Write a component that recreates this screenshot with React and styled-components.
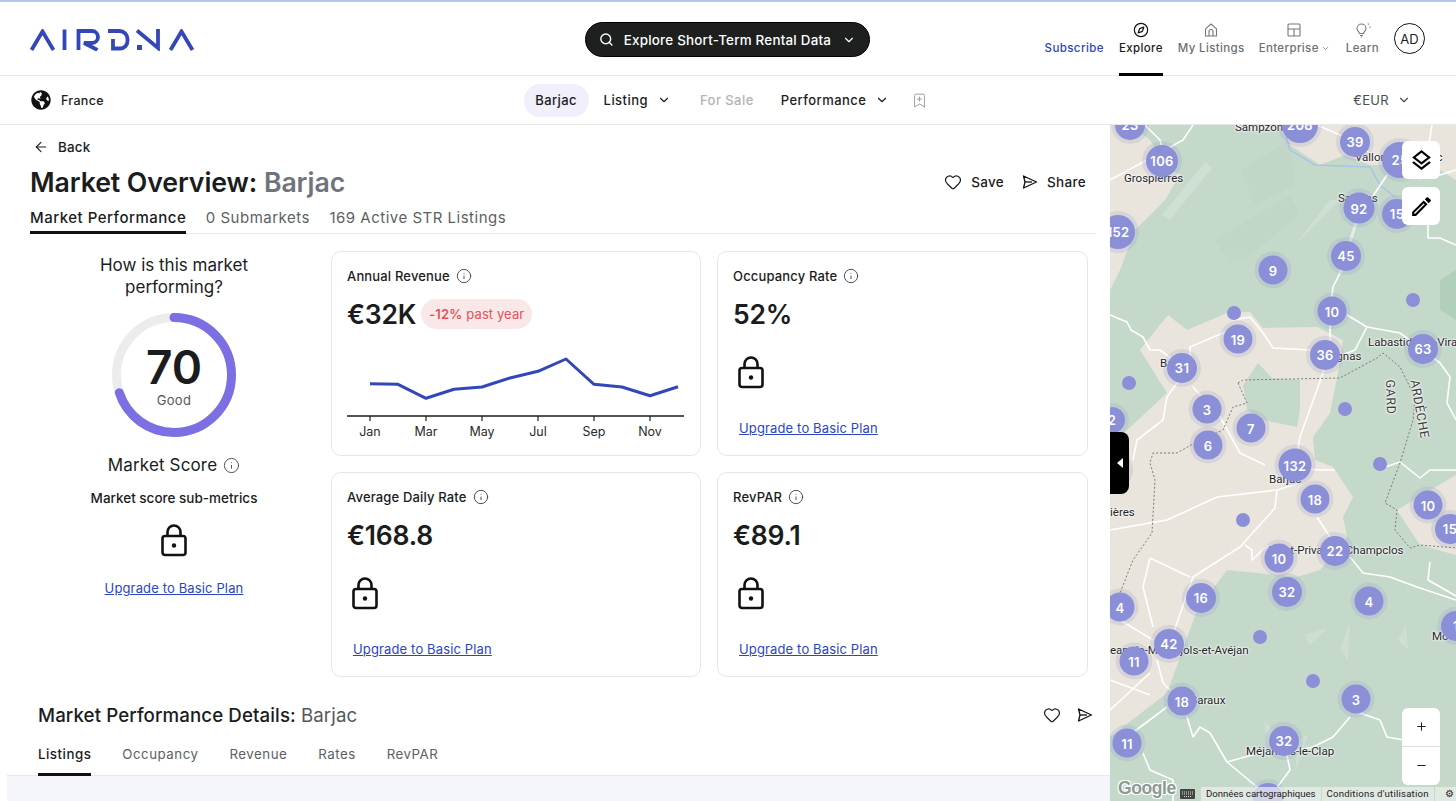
import React from 'react'
import styled, { createGlobalStyle } from 'styled-components'
import { FaGlobeAmericas } from 'react-icons/fa'
import { MdOutlineEdit, MdOutlineLayers } from 'react-icons/md'
import { ArrowLeft, BookmarkPlus, ChevronDown, Compass, Heart, Info, Minus, Plus, Search } from 'lucide-react'

const GlobalStyle = createGlobalStyle`
  html, body { margin: 0; padding: 0; background: #fff; }
  body { font-family: Inter, "Liberation Sans", sans-serif; color: #1b1c1d; overflow: hidden; }
  * { box-sizing: border-box; }
`

const Page = styled.div`
  width: 1456px;
  height: 801px;
  overflow: hidden;
  display: flex;
  flex-direction: column;
  border-top: 2px solid #b4c6ea;
`
const Header = styled.header`
  height: 74px;
  flex: none;
  display: grid;
  grid-template-columns: 1fr auto 1fr;
  align-items: center;
  padding: 0 31px 0 30px;
  border-bottom: 1px solid #e8e8e8;
`
const Logo = styled.svg`
  width: 165px;
  height: 22px;
  display: block;
  margin-top: 2px;
`
const SearchPill = styled.button`
  width: 285px;
  height: 35px;
  margin-top: 2px;
  background: #1e2020;
  color: #fff;
  border: 1px solid #000;
  border-radius: 18px;
  display: flex;
  align-items: center;
  padding: 0 13px;
  font: 500 13.4px Inter, sans-serif;
  letter-spacing: 0.22px;
  white-space: nowrap;

  & > span { margin: 0 11px 0 10px; }
`
const TopNav = styled.nav`
  display: flex;
  justify-content: flex-end;
  align-items: stretch;
  height: 73px;
`
const SubscribeLink = styled.a`
  align-self: flex-start;
  margin: 39px 15px 0 0;
  font-size: 11.5px;
  line-height: 14px;
  font-weight: 500;
  letter-spacing: 0.42px;
  color: #2b45c4;
`
const NavItem = styled.div`
  position: relative;
  display: flex;
  flex-direction: column;
  align-items: center;
  margin-right: ${p => p.$gap}px;
  padding-top: 20px;
  font-size: 11.5px;
  line-height: 14px;
  font-weight: 500;
  letter-spacing: 0.36px;
  color: ${p => (p.$active ? '#1b1c1d' : '#6e7073')};
  white-space: nowrap;

  & > svg { height: 16px; margin-bottom: 3px; }

  ${p => p.$active && `
    &::after {
      content: '';
      position: absolute;
      left: 0;
      right: 0;
      bottom: -1px;
      height: 3px;
      background: #000;
    }
  `}
`
const NavLabel = styled.span`
  display: flex;
  align-items: center;
  gap: 2px;
`
const Avatar = styled.div`
  width: 31px;
  height: 31px;
  align-self: flex-start;
  margin-top: 21px;
  border: 1.3px solid #111;
  border-radius: 50%;
  display: flex;
  align-items: center;
  justify-content: center;
  font-size: 13px;
  color: #222;
`
const SubBar = styled.div`
  height: 49px;
  flex: none;
  display: grid;
  grid-template-columns: 1fr auto 1fr;
  align-items: center;
  padding: 0 35px 0 31px;
  border-bottom: 1px solid #e8e8e8;
`
const Country = styled.div`
  display: flex;
  align-items: center;
  gap: 10px;
  font-size: 12.5px;
  font-weight: 500;
  letter-spacing: 0.3px;
`
const SubNav = styled.div`
  display: flex;
  align-items: center;
`
const SubItem = styled.div`
  display: flex;
  align-items: center;
  gap: 9px;
  margin-right: ${p => p.$gap}px;
  font-size: 13px;
  font-weight: 500;
  letter-spacing: 0.45px;
  color: ${p => (p.$muted ? '#b3b3b3' : '#1b1c1d')};
`
const PlacePill = styled.div`
  height: 33px;
  width: 65px;
  margin-right: 15px;
  border-radius: 17px;
  background: #f0effb;
  display: flex;
  align-items: center;
  justify-content: center;
  font-size: 13px;
  font-weight: 500;
  letter-spacing: 0.35px;
`
const Currency = styled.div`
  display: flex;
  justify-content: flex-end;
  align-items: center;
  gap: 8px;
  margin-right: 10px;
  font-size: 13px;
  letter-spacing: 0.3px;
  color: #4c4e50;
`
const Body = styled.main`
  flex: 1;
  min-height: 0;
  display: flex;
`
const Content = styled.section`
  width: 1110px;
  flex: none;
  display: flex;
  flex-direction: column;
`
const Overview = styled.div`
  padding: 13px 14px 0 30px;
`
const BackLink = styled.div`
  display: flex;
  align-items: center;
  gap: 9px;
  height: 17px;
  padding-left: 3px;
  font-size: 13.4px;
  font-weight: 500;
  letter-spacing: 0.2px;
`
const TitleRow = styled.div`
  display: flex;
  justify-content: space-between;
  align-items: center;
  margin-top: 9px;
  height: 36px;
  padding-right: 10px;
`
const Title = styled.h1`
  margin: 0;
  font-size: 26.7px;
  line-height: 36px;
  font-weight: 600;
  letter-spacing: -0.1px;

  & > span { color: #6f747b; }
`
const Actions = styled.div`
  display: flex;
  align-items: center;
  gap: 18px;
`
const Action = styled.div`
  display: flex;
  align-items: center;
  gap: 9px;
  font-size: 13.5px;
  font-weight: 500;
  letter-spacing: 0.3px;
`
const Tabs = styled.div`
  display: flex;
  gap: ${p => p.$gap}px;
  border-bottom: 1px solid #e8e8e8;
`
const Tab = styled.div`
  position: relative;
  padding: ${p => p.$pad};
  font-size: ${p => p.$size}px;
  line-height: 18px;
  font-weight: ${p => (p.$active ? 500 : 400)};
  letter-spacing: 0.5px;
  color: ${p => (p.$active ? '#1b1c1d' : '#5c5f62')};

  ${p => p.$active && `
    &::after {
      content: '';
      position: absolute;
      left: 0;
      right: 0;
      bottom: -1px;
      height: 3px;
      background: #111;
    }
  `}
`
const Panels = styled.div`
  display: grid;
  grid-template-columns: 288px 1fr;
  margin-top: 17px;
  padding-right: 9px;
`
const ScoreColumn = styled.div`
  display: flex;
  flex-direction: column;
  align-items: center;
  text-align: center;
`
const ScoreTitle = styled.div`
  margin-top: 3px;
  width: 176px;
  font-size: 17px;
  line-height: 22px;
`
const Gauge = styled.div`
  position: relative;
  width: 128px;
  height: 128px;
  margin-top: 13px;
`
const GaugeValue = styled.div`
  position: absolute;
  inset: 0;
  display: flex;
  flex-direction: column;
  align-items: center;
  padding-top: 32px;
  font-size: 46px;
  line-height: 49px;
  font-weight: 600;

  & > span {
    font-size: 13px;
    line-height: 17px;
    font-weight: 400;
    letter-spacing: 0.3px;
    color: #55575a;
  }
`
const ScoreLabel = styled.div`
  display: flex;
  align-items: center;
  gap: 6px;
  margin-top: 16px;
  font-size: 17px;
  line-height: 20px;
  letter-spacing: 0.15px;
`
const SubMetrics = styled.div`
  margin-top: 15px;
  font-size: 13.5px;
  line-height: 17px;
  font-weight: 500;
`
const LockIcon = styled.svg`
  display: block;
  width: 28px;
  height: 34px;
`
const ScoreLock = styled.div`
  margin-top: 16px;
`
const UpgradeLink = styled.a`
  display: block;
  margin-top: ${p => p.$top}px;
  padding-left: ${p => p.$inset || 0}px;
  font-size: 13px;
  line-height: 17px;
  letter-spacing: 0.14px;
  color: #2b45c4;
  text-decoration: underline;
`
const Cards = styled.div`
  display: grid;
  grid-template-columns: 370px 371px;
  grid-auto-rows: 205px;
  gap: 16px;
  margin-left: 13px;
`
const Card = styled.article`
  border: 1.5px solid #e6e6e6;
  border-radius: 10px;
  padding: 15px 15px;
`
const CardLabel = styled.div`
  display: flex;
  align-items: center;
  gap: 6px;
  height: 18px;
  font-size: 13px;
  font-weight: 500;
  letter-spacing: 0.16px;

  & > svg { color: #444; }
`
const MetricRow = styled.div`
  display: flex;
  align-items: center;
  gap: 5px;
  margin-top: 13px;
  height: 32px;
`
const Metric = styled.div`
  font-size: 26.5px;
  font-weight: 600;
  letter-spacing: -0.2px;
  color: #1b1c1d;
`
const Change = styled.div`
  height: 30px;
  padding: 0 8px;
  border-radius: 15px;
  display: flex;
  align-items: center;
  gap: 4px;
  background: #fae8e8;
  color: #e5505a;
  font-size: 13px;
  letter-spacing: 0.1px;

  & > b { font-weight: 600; }
`
const ChartSvg = styled.svg`
  display: block;
  margin-top: 20px;
  width: 337px;
  height: 92px;
`
const CardLock = styled.div`
  margin-top: 25px;
  padding-left: 4px;
`
const Details = styled.div`
  margin-top: 25px;
  padding-left: 7px;
  display: flex;
  flex-direction: column;
  flex: 1;
`
const DetailsHead = styled.div`
  display: flex;
  justify-content: space-between;
  align-items: center;
  height: 26px;
  padding: 0 17px 0 31px;
`
const DetailsTitle = styled.h2`
  margin: 0;
  font-size: 18.7px;
  font-weight: 500;
  letter-spacing: 0.1px;

  & > span { color: #55585c; font-weight: 400; }
`
const IconRow = styled.div`
  display: flex;
  gap: 16px;
  align-items: center;
`
const DetailTabs = styled(Tabs)`
  margin-top: 8px;
  padding-left: 31px;
`
const Band = styled.div`
  flex: 1;
  background: #f5f6fb;
`
const MapPane = styled.aside`
  position: relative;
  flex: 1;
  overflow: hidden;
  background: #c5d9cb;
  font-family: Roboto, "Liberation Sans", sans-serif;
`
const Terrain = styled.svg`
  position: absolute;
  inset: 0;
  width: 346px;
  height: 676px;
`
const MapLabel = styled.div`
  position: absolute;
  transform: translateY(-50%);
  white-space: nowrap;
  font-size: 11.5px;
  color: #222;
  text-shadow: 0 0 2px #fff, 0 0 2px #fff, 0 0 3px #fff;
`
const RotatedLabel = styled(MapLabel)`
  font-size: 12.5px;
  letter-spacing: 0.6px;
  color: #3d3d3d;
  transform: translate(-50%, -50%) rotate(${p => p.$angle}deg);
`
const Pin = styled.div`
  position: absolute;
  transform: translate(-50%, -50%);
  border-radius: 50%;
  background: #8a8fd7;
  color: #fff;
  display: flex;
  align-items: center;
  justify-content: center;
  font: 600 13px Inter, sans-serif;
  letter-spacing: 0.3px;
  box-shadow: 0 0 0 4px rgba(150, 155, 205, 0.22);
`
const Dot = styled(Pin)`
  box-shadow: none;
`
const MapButton = styled.button`
  position: absolute;
  right: 16px;
  top: ${p => p.$top}px;
  width: 38px;
  height: 38px;
  border: none;
  border-radius: 6px;
  background: #fff;
  color: #000;
  display: flex;
  align-items: center;
  justify-content: center;
  padding: 0;
`
const ZoomBox = styled.div`
  position: absolute;
  right: 16px;
  bottom: 16px;
  width: 38px;
  height: 77px;
  border-radius: 6px;
  background: #fff;
  display: grid;
  grid-template-rows: 1fr 1fr;
  color: #222;

  & > div { display: flex; align-items: center; justify-content: center; }
  & > div:first-child { border-bottom: 1px solid #ddd; }
`
const CollapseHandle = styled.div`
  position: absolute;
  left: 0;
  top: 307px;
  width: 19px;
  height: 62px;
  background: #000;
  border-radius: 0 8px 8px 0;
  display: flex;
  align-items: center;
  justify-content: center;

  &::before {
    content: '';
    border-style: solid;
    border-width: 5px 6px 5px 0;
    border-color: transparent #fff transparent transparent;
  }
`
const GoogleMark = styled.div`
  position: absolute;
  left: 8px;
  bottom: 2px;
  font: 700 17.5px "Liberation Sans", sans-serif;
  letter-spacing: -0.4px;
  color: #8d9a92;
  text-shadow: -1px -1px 0 #fff, 1px -1px 0 #fff, -1px 1px 0 #fff, 1px 1px 0 #fff;
`
const Attribution = styled.div`
  position: absolute;
  left: 70px;
  right: 0;
  bottom: 0;
  height: 14px;
  display: flex;
  align-items: center;
  font-size: 9.6px;
  color: #222;
  white-space: nowrap;

  & > svg { flex: none; margin-right: 6px; }
  & > span {
    flex: none;
    height: 14px;
    line-height: 14px;
    padding: 0 5px;
    margin-right: 1px;
    background: rgba(235, 238, 235, 0.72);
  }
  & > span:nth-of-type(2) { letter-spacing: 0.2px; }
  & > span:last-child { flex: 1; margin-right: 0; padding: 0 0 0 10px; }
`

const months = ['Jan', 'Mar', 'May', 'Jul', 'Sep', 'Nov']
const revenue = [33.7, 34.3, 48.3, 39.3, 37, 28, 21.3, 9, 34.3, 37, 45.7, 36.7]

const clusters = [
  [1130, 125, '23', 30], [1300, 125, '208', 36], [1355, 142, '39', 30], [1162, 161, '106', 32],
  [1400, 160, '25', 36], [1359, 208, '92', 31], [1397, 214, '15', 30], [1118, 232, '152', 34],
  [1346, 256, '45', 30], [1273, 270, '9', 29], [1332, 311, '10', 29], [1238, 339, '19', 29],
  [1325, 355, '36', 30], [1423, 349, '63', 30], [1182, 368, '31', 30], [1112, 420, '2', 26],
  [1207, 409, '3', 29], [1251, 428, '7', 29], [1208, 445, '6', 29], [1115, 470, '', 28],
  [1295, 465, '132', 33], [1315, 499, '18', 29], [1428, 505, '10', 29], [1450, 529, '15', 30],
  [1279, 558, '10', 29], [1335, 551, '22', 30], [1287, 592, '32', 30], [1201, 598, '16', 30],
  [1120, 607, '4', 29], [1369, 601, '4', 29], [1456, 626, '1', 30], [1169, 644, '42', 30],
  [1134, 661, '11', 29], [1356, 699, '3', 29], [1182, 701, '18', 29], [1284, 741, '32', 30],
  [1127, 743, '11', 29], [1268, 798, '', 30],
]
const dots = [
  [1234, 313], [1413, 300], [1129, 383], [1345, 409], [1380, 464], [1243, 520], [1260, 637], [1313, 681],
]
const placeNames = [
  [1235, 127, 'Sampzon'], [1124, 178, 'Grospierres'], [1355, 157, 'Vallon-Pont-d’Arc'], [1338, 198, 'Salavas'],
  [1368, 342, 'Labastide-de-Vira'], [1160, 363, 'Barjac'], [1323, 356, 'Vagnas'], [1269, 479, 'Barjac'],
  [1110, 512, 'ières'], [1268, 550, 'Saint-Privat-de-Champclos'], [1110, 650, 'ean-de-Maruéjols-et-Avéjan'],
  [1190, 700, 'Baraux'], [1246, 751, 'Méjannes-le-Clap'], [1432, 636, 'Mo'],
]

const roads = [
  '1110,180 1147,160 1183,140 1193,125', '1145,125 1160,140 1165,160',
  '1317,125 1340,135 1387,163 1402,172', '1387,175 1357,220 1340,273 1333,287 1330,310 1330,340 1323,373 1300,437 1295,465 1300,483',
  '1347,315 1367,327 1400,333 1423,350 1440,363 1450,377 1447,403 1456,420', '1367,327 1355,350 1335,358',
  '1233,320 1250,317 1263,333 1273,348 1310,350', '1230,330 1190,347 1190,360',
  '1110,315 1127,322 1131,330 1143,337 1150,350 1160,350 1180,365', '1177,383 1167,397 1163,420 1137,440 1133,460',
  '1193,387 1220,417 1240,453 1265,465', '1110,530 1167,520 1217,497 1277,490 1300,483',
  '1277,490 1275,508 1240,547 1193,577 1172,637', '1317,517 1330,537', '1245,545 1252,550 1252,560 1268,545',
  '1350,557 1363,573 1390,577 1417,587 1456,600', '1150,558 1143,587 1153,627', '1150,558 1190,577',
  '1120,620 1153,640', '1157,660 1163,683 1170,690', '1110,710 1150,673', '1127,737 1167,707',
  '1187,717 1193,737 1200,727 1210,733 1227,762 1270,750', '1227,762 1257,787',
  '1357,712 1380,720 1387,737 1420,743', '1350,717 1333,737 1313,747 1287,753', '1143,753 1150,770 1173,780 1173,801',
  '1285,745 1290,770 1275,790', '1430,562 1428,580 1456,596', '1432,125 1428,150 1440,175 1456,170', '1428,225 1428,238 1440,238 1456,245',
  '1456,470 1430,470 1420,478 1410,470 1400,462 1382,468',
  '1295,468 1320,470 1335,470', '1110,680 1150,695',
]
const borders = [
  '1238,383 1243,380 1340,378 1377,358 1383,353 1400,367 1415,397 1413,420 1400,463 1385,503 1397,510 1395,530 1410,548 1420,545 1456,548',
  '1238,383 1247,403 1233,407 1223,430 1200,440 1177,453 1153,453 1150,463 1155,480 1152,533 1133,560 1120,593',
]

const Lock = () => (
  <LockIcon viewBox="0 0 28 34" fill="none" stroke="#111" strokeWidth="2.6">
    <rect x="2.5" y="13" width="23" height="19" rx="2.5" />
    <path d="M7.5 13V9a6.5 6.5 0 0 1 13 0v4" />
    <circle cx="14" cy="22.5" r="2.2" fill="#111" stroke="none" />
  </LockIcon>
)

const ShareIcon = ({ size }) => (
  <svg width={size} height={size} viewBox="0 0 16 16" fill="none" stroke="#111" strokeWidth="1.3" strokeLinejoin="round">
    <path d="M1.5 2 14.5 8 1.5 14 3 8Z" />
    <path d="M3 8h7" />
  </svg>
)

const MetricCard = ({ label, value }) => (
  <Card>
    <CardLabel>{label} <Info size={16} strokeWidth={1.4} /></CardLabel>
    <MetricRow><Metric>{value}</Metric></MetricRow>
    <CardLock><Lock /></CardLock>
    <UpgradeLink $top={31} $inset={6}>Upgrade to Basic Plan</UpgradeLink>
  </Card>
)

const RevenueChart = () => (
  <ChartSvg viewBox="0 0 337 92">
    <polyline
      fill="none"
      stroke="#3347b8"
      strokeWidth="3"
      strokeLinejoin="round"
      points={revenue.map((y, i) => `${23 + i * 28},${y}`).join(' ')}
    />
    <line x1="0" y1="66" x2="337" y2="66" stroke="#1b1c1d" strokeWidth="1.5" />
    {months.map((m, i) => (
      <g key={m}>
        <line x1={23 + i * 56} y1="66" x2={23 + i * 56} y2="71" stroke="#1b1c1d" strokeWidth="1.2" />
        <text x={23 + i * 56} y="86" textAnchor="middle" fontSize="12.5" fill="#2a2b2c" fontFamily="Inter, sans-serif">{m}</text>
      </g>
    ))}
  </ChartSvg>
)

const MapView = () => (
  <MapPane>
    <Terrain viewBox="1110 125 346 676">
      <g fill="#e9e5dc">
        <polygon points="1110,125 1130,125 1150,140 1165,165 1180,175 1165,200 1135,230 1120,270 1110,290" />
        <polygon points="1280,125 1456,125 1456,150 1420,180 1395,165 1370,165 1345,155 1320,165 1290,145" />
        <polygon points="1110,446 1167,393 1140,350 1168,315 1187,330 1227,313 1250,312 1263,328 1317,327 1343,340 1337,378 1330,413 1313,437 1315,460 1333,467 1353,497 1343,517 1347,537 1320,570 1297,577 1227,570 1197,610 1167,693 1110,737" />
        <polygon points="1397,510 1456,475 1456,555 1420,545" />
        <polygon points="1428,125 1456,125 1456,180 1440,170" />
      </g>
      <polygon points="1243,385 1258,363 1272,378 1300,380 1300,410 1297,427 1263,420 1247,410" fill="#c5d9cb" />
      <g fill="#bdd4c4" opacity="0.45">
        <polygon points="1215,240 1290,195 1300,215 1250,255 1230,265" />
        <polygon points="1240,170 1290,140 1295,185 1255,205" />
      </g>
      <polygon points="1440,280 1456,270 1456,320 1440,310" fill="#a9cbb2" opacity="0.7" />
      <g fill="#d4e2d8" opacity="0.6">
        <polygon points="1162,215 1205,162 1212,168 1170,220" />
        <polygon points="1295,245 1330,200 1340,200 1300,240" />
        <polygon points="1304,635 1328,628 1310,645" />
        <polygon points="1340,650 1350,620 1348,660" />
        <polygon points="1398,640 1406,625 1408,650" />
        <polygon points="1264,720 1268,745 1282,740" />
        <polygon points="1296,740 1308,735 1296,770" />
      </g>
      <polyline points="1283,125 1290,150 1315,165 1370,167 1380,185 1395,197" fill="none" stroke="#a9c4e6" strokeWidth="1.5" />
      <g fill="none" stroke="#fff" strokeWidth="1.6" strokeLinejoin="round">
        {roads.map((r, i) => <polyline key={i} points={r} />)}
      </g>
      <polyline points="1357,220 1340,273" fill="none" stroke="#e6eae8" strokeWidth="3" />
      <g fill="none" stroke="#6c6f6c" strokeWidth="0.9" strokeDasharray="2 2">
        {borders.map((b, i) => <polyline key={i} points={b} />)}
      </g>
    </Terrain>
    {placeNames.map(([x, y, name]) => (
      <MapLabel key={name + x} style={{ left: x - 1110, top: y - 125 }}>{name}</MapLabel>
    ))}
    <RotatedLabel $angle={88} style={{ left: 281, top: 272 }}>GARD</RotatedLabel>
    <RotatedLabel $angle={80} style={{ left: 310, top: 284 }}>ARDÈCHE</RotatedLabel>
    {dots.map(([x, y]) => (
      <Dot key={`${x}-${y}`} style={{ left: x - 1110, top: y - 125, width: 14, height: 14 }} />
    ))}
    {clusters.map(([x, y, n, size]) => (
      <Pin key={`${x}-${y}`} style={{ left: x - 1110, top: y - 125, width: size, height: size }}>{n}</Pin>
    ))}
    <MapButton $top={16}><MdOutlineLayers size={25} /></MapButton>
    <MapButton $top={62}><MdOutlineEdit size={25} /></MapButton>
    <CollapseHandle />
    <ZoomBox>
      <div><Plus size={13} strokeWidth={2} /></div>
      <div><Minus size={13} strokeWidth={2} /></div>
    </ZoomBox>
    <GoogleMark>Google</GoogleMark>
    <Attribution>
      <svg width="15" height="10" viewBox="0 0 15 10">
        <rect width="15" height="10" rx="1" fill="#444" />
        <path d="M2 3h11M2 5h11M4 7.5h7" stroke="#ddd" strokeWidth="1" strokeDasharray="1 1" />
      </svg>
      <span>Données cartographiques</span>
      <span>Conditions d'utilisation</span>
      <span>⚙</span>
    </Attribution>
  </MapPane>
)

const App = () => (
  <Page>
    <GlobalStyle />
    <Header>
      <Logo viewBox="30 29 165 22" fill="none" stroke="#3347b8" strokeWidth="3.8">
        <path d="M31.5 50 42.5 31.5 53.5 50" strokeLinejoin="miter" />
        <path d="M64.5 29.5V50" />
        <path d="M78.5 50V31H92a5.5 5.5 0 0 1 0 12H84L97.5 50" />
        <path d="M108 31h11.5a8 8 0 0 1 8 8v2a7.5 7.5 0 0 1-7.5 7.5H113V39" />
        <rect x="137" y="45" width="5" height="5" fill="#3347b8" stroke="none" />
        <path d="M137 30.5 158 48V29" />
        <path d="M170.500 50 181.500 31.500 192.500 50" />
      </Logo>
      <SearchPill>
        <Search size={17} strokeWidth={2.3} />
        <span>Explore Short-Term Rental Data</span>
        <ChevronDown size={16} strokeWidth={2} />
      </SearchPill>
      <TopNav>
        <SubscribeLink>Subscribe</SubscribeLink>
        <NavItem $active $gap={15}>
          <Compass size={16} strokeWidth={1.8} color="#111" />
          <NavLabel>Explore</NavLabel>
        </NavItem>
        <NavItem $gap={14}>
          <svg width="16" height="16" viewBox="0 0 16 16" fill="none" stroke="#777" strokeWidth="1.1">
            <path d="M2.500 14V6.800L8 2l5.500 4.800V14Z" strokeLinejoin="round" />
            <path d="M6 14V9.500a2 2 0 0 1 4 0V14" />
          </svg>
          <NavLabel>My Listings</NavLabel>
        </NavItem>
        <NavItem $gap={16}>
          <svg width="16" height="16" viewBox="0 0 16 16" fill="none" stroke="#777" strokeWidth="1.1">
            <rect x="2" y="2" width="12" height="12" rx="1" />
            <path d="M2 7h12M8 7v7" />
          </svg>
          <NavLabel>Enterprise <ChevronDown size={9} strokeWidth={2} /></NavLabel>
        </NavItem>
        <NavItem $gap={15}>
          <svg width="22" height="16" viewBox="0 0 22 16" fill="none" stroke="#777" strokeWidth="1.1">
            <path d="M8.500 11.500c0-1.500-2.500-2.500-2.500-5a4.500 4.500 0 0 1 9 0c0 2.500-2.500 3.500-2.500 5Z" />
            <path d="M9 13.500h3M10 15h1" />
            <path d="M17 2.500l.6-.8M18.500 5h1" strokeWidth="1.4" />
          </svg>
          <NavLabel>Learn</NavLabel>
        </NavItem>
        <Avatar>AD</Avatar>
      </TopNav>
    </Header>
    <SubBar>
      <Country><FaGlobeAmericas size={20} color="#111" /> France</Country>
      <SubNav>
        <PlacePill>Barjac</PlacePill>
        <SubItem $gap={29}>Listing <ChevronDown size={14} strokeWidth={2} /></SubItem>
        <SubItem $gap={27} $muted>For Sale</SubItem>
        <SubItem $gap={22}>Performance <ChevronDown size={14} strokeWidth={2} /></SubItem>
        <BookmarkPlus size={17} strokeWidth={1.3} color="#9a9a9a" />
      </SubNav>
      <Currency>€EUR <ChevronDown size={14} strokeWidth={2} /></Currency>
    </SubBar>
    <Body>
      <Content>
        <Overview>
          <BackLink><ArrowLeft size={16} strokeWidth={1.6} /> Back</BackLink>
          <TitleRow>
            <Title>Market Overview: <span>Barjac</span></Title>
            <Actions>
              <Action><Heart size={18} strokeWidth={1.6} /> Save</Action>
              <Action><ShareIcon size={16} /> Share</Action>
            </Actions>
          </TitleRow>
          <Tabs $gap={19.5}>
            <Tab $active $size={15} $pad="9px 0 6px">Market Performance</Tab>
            <Tab $size={15} $pad="9px 0 6px">0 Submarkets</Tab>
            <Tab $size={15} $pad="9px 0 6px">169 Active STR Listings</Tab>
          </Tabs>
          <Panels>
            <ScoreColumn>
              <ScoreTitle>How is this market performing?</ScoreTitle>
              <Gauge>
                <svg width="128" height="128" viewBox="0 0 128 128" fill="none" strokeWidth="9">
                  <circle cx="64" cy="64" r="57.500" stroke="#ececec" />
                  <circle
                    cx="64"
                    cy="64"
                    r="57.500"
                    stroke="#7b6fe3"
                    strokeLinecap="round"
                    pathLength="100"
                    strokeDasharray="70 100"
                    transform="rotate(-90 64 64)"
                  />
                </svg>
                <GaugeValue>70<span>Good</span></GaugeValue>
              </Gauge>
              <ScoreLabel>Market Score <Info size={17} strokeWidth={1.3} color="#444" /></ScoreLabel>
              <SubMetrics>Market score sub-metrics</SubMetrics>
              <ScoreLock><Lock /></ScoreLock>
              <UpgradeLink $top={23}>Upgrade to Basic Plan</UpgradeLink>
            </ScoreColumn>
            <Cards>
              <Card>
                <CardLabel>Annual Revenue <Info size={16} strokeWidth={1.4} /></CardLabel>
                <MetricRow>
                  <Metric>€32K</Metric>
                  <Change><b>-12%</b> past year</Change>
                </MetricRow>
                <RevenueChart />
              </Card>
              <MetricCard label="Occupancy Rate" value="52%" />
              <MetricCard label="Average Daily Rate" value="€168.8" />
              <MetricCard label="RevPAR" value="€89.1" />
            </Cards>
          </Panels>
        </Overview>
        <Details>
          <DetailsHead>
            <DetailsTitle>Market Performance Details: <span>Barjac</span></DetailsTitle>
            <IconRow>
              <Heart size={18} strokeWidth={1.6} />
              <ShareIcon size={16} />
            </IconRow>
          </DetailsHead>
          <DetailTabs $gap={31}>
            <Tab $active $size={13.3} $pad="9px 0 12px">Listings</Tab>
            <Tab $size={13.3} $pad="9px 0 12px">Occupancy</Tab>
            <Tab $size={13.3} $pad="9px 0 12px">Revenue</Tab>
            <Tab $size={13.3} $pad="9px 0 12px">Rates</Tab>
            <Tab $size={13.3} $pad="9px 0 12px">RevPAR</Tab>
          </DetailTabs>
          <Band />
        </Details>
      </Content>
      <MapView />
    </Body>
  </Page>
)

export default App
